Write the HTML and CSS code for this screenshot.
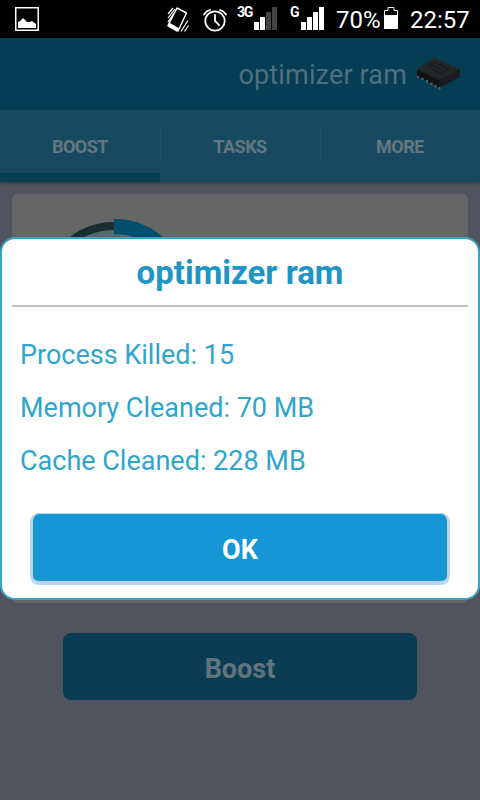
FILE: index.html
```html
<!DOCTYPE html>
<html lang="en">
<head>
  <meta charset="UTF-8">
  <meta name="viewport" content="width=device-width, initial-scale=1.0">
  <title>optimizer ram</title>
  <link rel="stylesheet" href="styles.css">
</head>
<body>
  <div class="status-bar">
    <svg class="icon-picture" width="24" height="24" viewBox="0 0 24 24">
      <rect x="0.75" y="0.75" width="22.5" height="22.5" fill="none" stroke="#fff" stroke-width="1.5"/>
      <path d="M3 21v-6l2-1 3-3 4 4 3 0 2-1 4 3v4z" fill="#fff"/>
    </svg>
    <svg class="icon-vibrate" width="22" height="26" viewBox="0 0 22 26" fill="none" stroke="#fff">
      <path d="M10 1L19.500 6 11 24 1 18.500z" stroke-width="1.500" stroke-linejoin="round"/>
      <path d="M1.500 17.500l9.500 5.500" stroke-width="4"/>
      <path d="M1 7l5-6M1 11l7-9M1 15l6-9M14 24.500l7-11M17.500 24.500l4-6" stroke-width="1.200"/>
    </svg>
    <svg class="icon-alarm" width="24" height="24" viewBox="0 0 24 24" fill="none" stroke="#fff" stroke-linecap="round">
      <circle cx="12" cy="13" r="9.700" stroke-width="1.800"/>
      <path d="M12 7v6l4 4" stroke-width="1.800"/>
      <path d="M1 6.500Q3 3 7 2M23 6.500Q21 3 17 2" stroke-width="1.800"/>
    </svg>
    <span class="network net-3g">3G</span>
    <svg class="bars-3g" width="24" height="24" viewBox="0 0 24 24">
      <path d="M0 16h5v8H0zM6 11h5v13H6z" fill="#fff"/>
      <path d="M12 6h5v18h-5zM18 1h5v23h-5z" fill="#444"/>
    </svg>
    <span class="network net-g">G</span>
    <svg class="bars-g" width="24" height="24" viewBox="0 0 24 24">
      <path d="M0 16h5v8H0zM6 11h5v13H6zM12 6h5v18h-5zM18 1h5v23h-5z" fill="#fff"/>
    </svg>
    <span class="battery-text">70%</span>
    <svg class="icon-battery" width="14" height="22" viewBox="0 0 14 22">
      <path d="M.5 21.500V3.500H4V.5h6v3h3.500v18z" fill="none" stroke="#fff"/>
      <path d="M0 8h14v14H0z" fill="#fff"/>
    </svg>
    <span class="clock">22:57</span>
  </div>

  <header>
    <h1>optimizer ram</h1>
    <svg class="chip" width="46" height="34" viewBox="0 0 46 34">
      <path d="M1 12L18 1l26 11-21 11z" fill="#242627"/>
      <path d="M1 12l22 11v8L1 19z" fill="#111415"/>
      <path d="M23 23l21-11v8L23 31z" fill="#1a1c1d"/>
      <path d="M10 9l9-5 17 8-11 6z" fill="#1d1f20"/>
      <path d="M14 9l13 6M18 7l12 6" stroke="#292b2c"/>
      <path d="M2 19v2M6.500 21v2M11 23v2.500M15.500 25.500v2.500M19.500 28v2.500M23.500 30v2.500" stroke="#596164" stroke-width="2"/>
    </svg>
  </header>

  <nav>
    <a class="tab active" href="#">BOOST</a>
    <a class="tab" href="#">TASKS</a>
    <a class="tab" href="#">MORE</a>
  </nav>

  <main>
    <section class="card">
      <svg class="gauge" width="160" height="160" viewBox="0 0 160 160">
        <circle cx="80" cy="80" r="64" fill="#59676c"/>
        <circle cx="80" cy="80" r="68" fill="none" stroke="#1b2d34" stroke-width="8"/>
        <path d="M80 12.500a67.500 67.500 0 0 1 67.500 67.500" fill="none" stroke="#034d6f" stroke-width="15"/>
      </svg>
    </section>
    <button class="boost-btn">Boost</button>
  </main>

  <div class="dialog">
    <h2>optimizer ram</h2>
    <div class="results">
      <p class="killed">Process Killed: 15</p>
      <p class="memory">Memory Cleaned: 70 MB</p>
      <p class="cache">Cache Cleaned: 228 MB</p>
    </div>
    <button class="ok-btn">OK</button>
  </div>
</body>
</html>
```

FILE: styles.css
```css
* {
  box-sizing: border-box;
}
body {
  font-family: Roboto, sans-serif;
  margin: 0;
  padding: 0;
  height: 800px;
  background: #51545e;
  overflow: hidden;
  position: relative;
}
h1, h2, p {
  margin: 0;
}

.status-bar {
  display: flex;
  align-items: flex-start;
  height: 38px;
  padding: 7px 0 0 15px;
  background: #000;
  color: white;
}
.status-bar svg {
  flex: none;
}
.icon-vibrate {
  margin-left: 128px;
}
.icon-alarm {
  margin: 1px 0 0 14px;
}
.network {
  font-size: 14px;
  line-height: 11px;
  font-weight: bold;
  letter-spacing: -1.2px;
  white-space: nowrap;
}
.net-3g {
  width: 16px;
  margin-left: 10px;
}
.net-g {
  width: 10px;
  margin-left: 12px;
}
.bars-3g, .bars-g {
  margin-left: 1px;
  margin-top: -1px;
}
.battery-text, .clock {
  font-size: 24px;
  line-height: 26px;
}
.battery-text {
  width: 46px;
  margin-left: 11px;
}
.icon-battery {
  margin-left: 2px;
}
.clock {
  margin-left: 12px;
  white-space: nowrap;
}

header {
  display: flex;
  justify-content: flex-end;
  align-items: center;
  height: 72px;
  padding-right: 18px;
  background: #043d54;
}
header h1 {
  padding-top: 2px;
  font-size: 27px;
  font-weight: normal;
  color: #4f707f;
  letter-spacing: 0.15px;
}
.chip {
  margin-left: 9px;
}

nav {
  display: flex;
  height: 72px;
  background: #174a61;
  box-shadow: 0 1px 3px rgba(0,0,0,0.4);
}
.tab {
  flex: 1;
  display: flex;
  align-items: center;
  justify-content: center;
  height: 72px;
  padding-top: 10px;
  border-bottom: 9px solid transparent;
  color: #64777f;
  font-size: 18px;
  font-weight: bold;
  letter-spacing: -0.5px;
  text-decoration: none;
  background: linear-gradient(#1e5068, #1e5068) left 18px / 1px 36px no-repeat;
}
.tab.active {
  border-bottom-color: #043d54;
  background: none;
}

main {
  display: flex;
  flex-direction: column;
  align-items: center;
  padding: 12px;
}
.card {
  width: 456px;
  height: 409px;
  padding: 20px 22px;
  background: #666;
  border-radius: 5px;
}
.boost-btn {
  width: 354px;
  height: 67px;
  margin-top: 30px;
  padding: 4px 0 0;
  border: none;
  border-radius: 8px;
  background: #0a3d54;
  color: #62757e;
  font: bold 27px Roboto, sans-serif;
}

/* sits over the dimmed app screen */
.dialog {
  position: absolute;
  top: 237px;
  left: 0;
  width: 480px;
  height: 363px;
  padding: 0 10px;
  background: white;
  border: 2px solid #36a5c5;
  border-radius: 15px;
}
.dialog h2 {
  height: 68px;
  border-bottom: 2px solid #c0c0c0;
  color: #2094c4;
  font-size: 33px;
  line-height: 68px;
  text-align: center;
}
.results {
  padding: 22px 8px 0;
  color: #2fa6cb;
  font-size: 27px;
  line-height: 53px;
}
.ok-btn {
  display: block;
  width: 420px;
  height: 72px;
  margin: 25px auto 0;
  padding: 4px 0 0;
  border: solid #b6d5e8;
  border-width: 1px 3px 4px;
  border-radius: 9px;
  background: #1696d5;
  color: white;
  font: bold 27px Roboto, sans-serif;
}
```
